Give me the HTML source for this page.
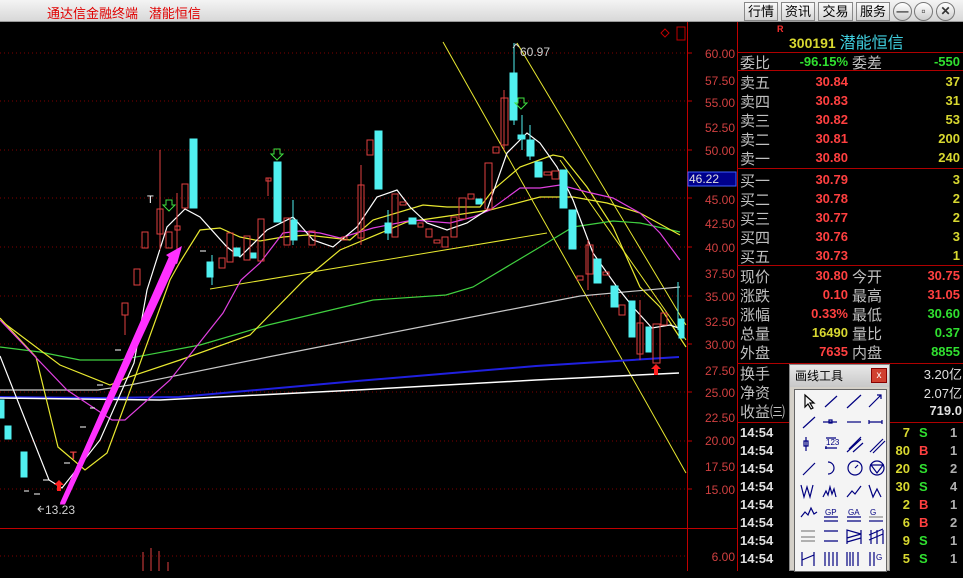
<!DOCTYPE html>
<html><head><meta charset="utf-8"><style>
*{margin:0;padding:0;box-sizing:border-box}
body{width:963px;height:571px;background:#000;overflow:hidden;position:relative;font-family:"Liberation Sans","Noto Sans CJK SC",sans-serif}
#tb{position:absolute;left:0;top:0;width:963px;height:22px;background:linear-gradient(#f4f4f4,#d8d8d8);border-bottom:1px solid #999}
#tb .t{position:absolute;left:47px;top:3px;color:#e00000;font-size:13px}
.btn{position:absolute;top:2px;height:19px;border:1px solid #888;background:linear-gradient(#fafafa,#d4d4d4);font-size:13px;line-height:17px;text-align:center;color:#000}
.rb{position:absolute;top:2px;width:19px;height:19px;border-radius:50%;border:1px solid #777;background:linear-gradient(#fff,#ccc);font-size:12px;line-height:17px;text-align:center;color:#333;font-weight:bold}
.r{position:absolute;font-size:14px;white-space:nowrap}
.l{color:#c0c0c0;font-size:15px}
.n{font-weight:bold;font-size:13px;font-family:"Liberation Sans",sans-serif}
.red{color:#ff4040}.yel{color:#d8d830}.grn{color:#30e030}.wht{color:#e0e0e0}
.hl{position:absolute;left:737px;width:226px;height:1px;background:#b00000}
#dlg{position:absolute;left:789px;top:364px;width:101px;height:207px;background:#d4d0c8;border:1px solid #888}
#dlg .h{height:22px;background:linear-gradient(#e8e8e8,#c8c8c8);font-size:12px;line-height:22px;padding-left:5px;color:#000}
#dlg .x{position:absolute;left:81px;top:3px;width:16px;height:15px;background:#d04030;border:1px solid #800;color:#fff;font-size:10px;text-align:center;line-height:13px}
#dlg .p{position:absolute;left:4px;top:24px;width:93px;height:183px;background:#f4f4f4;border:1px solid #666}
</style></head><body>
<div id="tb"><span class="t">通达信金融终端 &nbsp; 潜能恒信</span>
<div class="btn" style="left:744px;width:34px">行情</div>
<div class="btn" style="left:781px;width:34px">资讯</div>
<div class="btn" style="left:818px;width:35px">交易</div>
<div class="btn" style="left:856px;width:34px">服务</div>
<div class="rb" style="left:893px">—</div>
<div class="rb" style="left:914px">▫</div>
<div class="rb" style="left:936px">✕</div>
</div>

<svg width="963" height="571" style="position:absolute;left:0;top:0" xmlns="http://www.w3.org/2000/svg">
<g stroke="#800000" stroke-dasharray="1,3" stroke-width="1">
<line x1="0" y1="53" x2="687" y2="53"/><line x1="0" y1="101" x2="687" y2="101"/><line x1="0" y1="150" x2="687" y2="150"/><line x1="0" y1="198" x2="687" y2="198"/><line x1="0" y1="247" x2="687" y2="247"/><line x1="0" y1="296" x2="687" y2="296"/><line x1="0" y1="344" x2="687" y2="344"/><line x1="0" y1="392" x2="687" y2="392"/><line x1="0" y1="441" x2="687" y2="441"/><line x1="0" y1="489" x2="687" y2="489"/><line x1="0" y1="556" x2="687" y2="556"/>
</g>
<line x1="687.5" y1="22" x2="687.5" y2="571" stroke="#c00000"/>
<line x1="737.5" y1="22" x2="737.5" y2="571" stroke="#c00000"/>
<line x1="0" y1="528.5" x2="737" y2="528.5" stroke="#c00000"/>
<g stroke="#c00000"><line x1="687" y1="53" x2="692" y2="53"/><line x1="687" y1="101" x2="692" y2="101"/><line x1="687" y1="150" x2="692" y2="150"/><line x1="687" y1="198" x2="692" y2="198"/><line x1="687" y1="247" x2="692" y2="247"/><line x1="687" y1="296" x2="692" y2="296"/><line x1="687" y1="344" x2="692" y2="344"/><line x1="687" y1="392" x2="692" y2="392"/><line x1="687" y1="441" x2="692" y2="441"/><line x1="687" y1="489" x2="692" y2="489"/></g>
<g fill="#d04040" font-size="12" text-anchor="end" font-family="Liberation Sans">
<text x="735" y="58">60.00</text><text x="735" y="85">57.50</text><text x="735" y="107">55.00</text><text x="735" y="132">52.50</text><text x="735" y="155">50.00</text><text x="735" y="204">45.00</text><text x="735" y="228">42.50</text><text x="735" y="252">40.00</text><text x="735" y="278">37.50</text><text x="735" y="301">35.00</text><text x="735" y="326">32.50</text><text x="735" y="349">30.00</text><text x="735" y="375">27.50</text><text x="735" y="397">25.00</text><text x="735" y="422">22.50</text><text x="735" y="445">20.00</text><text x="735" y="471">17.50</text><text x="735" y="494">15.00</text><text x="735" y="561">6.00</text>
</g>
<rect x="688" y="172" width="48" height="14" fill="#00008c" stroke="#4060ff"/>
<text x="689" y="183" fill="#e0e0e0" font-size="12" font-family="Liberation Sans">46.22</text>
<path d="M665 29 l4 4 -4 4 -4 -4z" fill="none" stroke="#c00000"/><rect x="677" y="27" width="8" height="13" fill="none" stroke="#c00000"/>

<!-- channel lines -->
<g stroke="#e8e830" stroke-width="1" fill="none">
<line x1="443" y1="42" x2="686" y2="473"/>
<line x1="517" y1="43" x2="686" y2="325"/>
<line x1="560" y1="160" x2="686" y2="340"/>
<line x1="210" y1="289" x2="547" y2="233"/>
</g>
<!-- MAs -->
<g fill="none" stroke-width="1.2">
<polyline stroke="#2020e0" stroke-width="2" points="0,397 100,398 179,397 357,381 536,366 679,357"/>
<polyline stroke="#ffffff" stroke-width="1.5" points="0,398 160,400 357,390 536,380 679,373"/>
<polyline stroke="#c8c8c8" points="0,390 98,390 130,385 268,357 446,322 580,296 680,287"/>
<polyline stroke="#40d040" points="0,347 40,352 80,360 120,360 200,345 268,325 373,300 446,295 473,287 540,247 573,227 613,221 640,223 680,232"/>
<polyline stroke="#e8e830" points="0,318 36,357 58,447 85,470 107,453 134,380 170,280 180,262 200,230 220,228 240,237 260,241 283,237 307,235 350,240 373,220 423,205 447,207 480,207 493,190 520,167 553,155 563,157 587,187 613,227 640,287 660,307 686,347"/>
<polyline stroke="#e8e830" points="0,320 60,365 110,385 129,377 180,360 250,335 304,280 340,250 407,222 490,210 540,197 573,197 607,203 640,213 680,235"/>
<polyline stroke="#e040e0" points="0,320 67,390 112,420 125,420 170,380 223,313 241,280 260,263 283,233 300,231 320,233 340,238 373,228 413,220 450,223 473,217 490,210 520,188 540,188 560,185 587,192 613,198 640,213 660,233 680,260"/>
<polyline stroke="#ffffff" points="0,356 49,480 62,488 100,440 134,363 147,290 167,227 185,209 200,217 227,247 240,257 267,230 293,217 313,240 333,247 357,227 377,197 397,190 410,207 427,223 447,230 467,223 487,210 507,153 527,133 540,143 557,167 573,200 593,253 617,287 633,307 652,328 670,325 684,330"/>
</g>
<!-- candles cyan -->
<g fill="#50f0f0" stroke="#50f0f0">
<rect x="0" y="400" width="4" height="18"/><rect x="5" y="426" width="6" height="13"/><rect x="21" y="452" width="6" height="25"/>
<rect x="190" y="139" width="7" height="69"/><rect x="207" y="262" width="6" height="15"/><rect x="233" y="248" width="7" height="8"/><rect x="250" y="253" width="6" height="5"/><rect x="274" y="162" width="7" height="60"/><rect x="290" y="220" width="7" height="20"/>
<rect x="375" y="131" width="7" height="58"/><rect x="385" y="223" width="6" height="10"/><rect x="409" y="218" width="7" height="6"/><rect x="476" y="199" width="6" height="5"/><rect x="510" y="73" width="7" height="47"/><rect x="518" y="135" width="7" height="4"/><rect x="527" y="140" width="7" height="16"/><rect x="535" y="162" width="7" height="15"/><rect x="560" y="170" width="7" height="38"/><rect x="569" y="210" width="7" height="39"/><rect x="594" y="259" width="7" height="24"/><rect x="611" y="286" width="7" height="21"/><rect x="629" y="301" width="6" height="36"/><rect x="646" y="327" width="5" height="25"/><rect x="679" y="319" width="5" height="19"/>
<line x1="514" y1="43" x2="514" y2="125"/><line x1="522" y1="115" x2="522" y2="150"/><line x1="530" y1="125" x2="530" y2="160"/><line x1="293" y1="200" x2="293" y2="245"/><line x1="212" y1="255" x2="212" y2="285"/><line x1="388" y1="210" x2="388" y2="240"/><line x1="678" y1="282" x2="678" y2="330"/>
</g>
<!-- candles red -->
<g fill="none" stroke="#e04040">
<rect x="122" y="303" width="6" height="12"/><rect x="134" y="269" width="6" height="16"/><rect x="142" y="232" width="6" height="16"/><rect x="157" y="209" width="6" height="25"/><rect x="166" y="232" width="6" height="16"/><rect x="175" y="226" width="5" height="4"/><rect x="182" y="184" width="6" height="24"/>
<rect x="219" y="258" width="6" height="10"/><rect x="227" y="233" width="6" height="29"/><rect x="244" y="236" width="6" height="24"/><rect x="258" y="219" width="6" height="42"/><rect x="266" y="178" width="5" height="3"/><rect x="284" y="218" width="6" height="27"/><rect x="309" y="231" width="6" height="14"/>
<rect x="342" y="237" width="5" height="3"/><rect x="358" y="185" width="6" height="53"/><rect x="367" y="140" width="6" height="15"/><rect x="392" y="194" width="6" height="43"/><rect x="400" y="202" width="6" height="3"/><rect x="418" y="223" width="5" height="4"/><rect x="426" y="229" width="6" height="8"/><rect x="434" y="240" width="6" height="3"/><rect x="442" y="237" width="6" height="10"/><rect x="451" y="217" width="6" height="20"/><rect x="459" y="198" width="7" height="21"/><rect x="468" y="194" width="6" height="5"/><rect x="485" y="163" width="7" height="46"/><rect x="493" y="147" width="6" height="6"/><rect x="501" y="98" width="7" height="47"/>
<rect x="544" y="172" width="7" height="3"/><rect x="552" y="171" width="7" height="8"/><rect x="577" y="276" width="6" height="4"/><rect x="586" y="245" width="7" height="29"/><rect x="603" y="272" width="6" height="3"/><rect x="619" y="305" width="6" height="10"/><rect x="637" y="323" width="6" height="31"/><rect x="653" y="324" width="7" height="39"/><rect x="661" y="313" width="6" height="12"/>
<line x1="160" y1="150" x2="160" y2="250"/><line x1="177" y1="193" x2="177" y2="250"/><line x1="268" y1="178" x2="268" y2="196"/><line x1="361" y1="165" x2="361" y2="245"/><line x1="125" y1="315" x2="125" y2="335"/><line x1="504" y1="90" x2="504" y2="150"/><line x1="588" y1="240" x2="588" y2="290"/><line x1="640" y1="300" x2="640" y2="360"/>
</g>
<g stroke="#fff"><line x1="24" y1="491" x2="29" y2="491"/><line x1="34" y1="494" x2="40" y2="494"/><line x1="43" y1="480" x2="49" y2="480"/><line x1="64" y1="463" x2="70" y2="463"/><line x1="80" y1="427" x2="86" y2="427"/><line x1="90" y1="408" x2="95" y2="408"/><line x1="97" y1="385" x2="103" y2="385"/><line x1="115" y1="350" x2="121" y2="350"/><line x1="200" y1="251" x2="206" y2="251"/></g>
<text x="147" y="203" fill="#fff" font-size="11">T</text>
<text x="70" y="459" fill="#e04040" font-size="11" font-weight="bold">T</text>
<!-- green arrows -->
<g fill="none" stroke="#40e040"><path d="M166 200h6v5h3l-6 6-6-6h3z"/><path d="M274 149h6v5h3l-6 6-6-6h3z"/><path d="M518 98h6v5h3l-6 6-6-6h3z"/></g>
<g fill="#ff2020"><path d="M59 480l5 5h-3v6h-4v-6h-3z"/><path d="M656 364l5 5h-3v6h-4v-6h-3z"/></g>
<text x="520" y="56" fill="#d0d0d0" font-size="12">60.97</text><path d="M513 48l3-4 3 3" stroke="#d0d0d0" fill="none"/>
<text x="45" y="514" fill="#d0d0d0" font-size="12">13.23</text><path d="M38 509h6M41 506l-3 3 3 3" stroke="#d0d0d0" fill="none"/>
<!-- pink arrow -->
<polygon points="60,503 64,503 172,262 177,264 182,246 166,255 170,258" fill="#ff30ff"/>
<polygon points="62,503 64,503 175,262 170,258" fill="#ff30ff" stroke="#ff30ff" stroke-width="3"/>
<g stroke="#e04040"><line x1="143" y1="552" x2="143" y2="571"/><line x1="151" y1="548" x2="151" y2="571"/><line x1="159" y1="551" x2="159" y2="571"/><line x1="168" y1="562" x2="168" y2="571"/></g>
</svg>

<div class="hl" style="top:52px"></div><div class="hl" style="top:70px"></div><div class="hl" style="top:168px"></div><div class="hl" style="top:265px"></div><div class="hl" style="top:363px"></div><div class="hl" style="top:422px"></div>
<div class="r" style="left:777px;top:24px;color:#ff3030;font-size:9px;font-weight:bold">R</div>
<div class="r" style="left:789px;top:29px"><span class="n yel" style="font-size:14px">300191</span> <span style="color:#40d0e0;font-size:16px">潜能恒信</span></div>
<div id="rows"></div>
<div class="r l" style="left:740px;top:52px">委比</div><div class="r n grn" style="left:790px;width:58px;text-align:right;top:54px">-96.15%</div><div class="r l" style="left:852px;top:52px">委差</div><div class="r n grn" style="left:900px;width:60px;text-align:right;top:54px">-550</div>

<div class="r l" style="left:740px;top:72px">卖五</div><div class="r n red" style="left:790px;width:58px;text-align:right;top:74px">30.84</div><div class="r n yel" style="left:900px;width:60px;text-align:right;top:74px">37</div>
<div class="r l" style="left:740px;top:91px">卖四</div><div class="r n red" style="left:790px;width:58px;text-align:right;top:93px">30.83</div><div class="r n yel" style="left:900px;width:60px;text-align:right;top:93px">31</div>
<div class="r l" style="left:740px;top:110px">卖三</div><div class="r n red" style="left:790px;width:58px;text-align:right;top:112px">30.82</div><div class="r n yel" style="left:900px;width:60px;text-align:right;top:112px">53</div>
<div class="r l" style="left:740px;top:129px">卖二</div><div class="r n red" style="left:790px;width:58px;text-align:right;top:131px">30.81</div><div class="r n yel" style="left:900px;width:60px;text-align:right;top:131px">200</div>
<div class="r l" style="left:740px;top:148px">卖一</div><div class="r n red" style="left:790px;width:58px;text-align:right;top:150px">30.80</div><div class="r n yel" style="left:900px;width:60px;text-align:right;top:150px">240</div>

<div class="r l" style="left:740px;top:170px">买一</div><div class="r n red" style="left:790px;width:58px;text-align:right;top:172px">30.79</div><div class="r n yel" style="left:900px;width:60px;text-align:right;top:172px">3</div>
<div class="r l" style="left:740px;top:189px">买二</div><div class="r n red" style="left:790px;width:58px;text-align:right;top:191px">30.78</div><div class="r n yel" style="left:900px;width:60px;text-align:right;top:191px">2</div>
<div class="r l" style="left:740px;top:208px">买三</div><div class="r n red" style="left:790px;width:58px;text-align:right;top:210px">30.77</div><div class="r n yel" style="left:900px;width:60px;text-align:right;top:210px">2</div>
<div class="r l" style="left:740px;top:227px">买四</div><div class="r n red" style="left:790px;width:58px;text-align:right;top:229px">30.76</div><div class="r n yel" style="left:900px;width:60px;text-align:right;top:229px">3</div>
<div class="r l" style="left:740px;top:246px">买五</div><div class="r n red" style="left:790px;width:58px;text-align:right;top:248px">30.73</div><div class="r n yel" style="left:900px;width:60px;text-align:right;top:248px">1</div>

<div class="r l" style="left:740px;top:266px">现价</div><div class="r n red" style="left:790px;width:58px;text-align:right;top:268px">30.80</div><div class="r l" style="left:852px;top:266px">今开</div><div class="r n red" style="left:900px;width:60px;text-align:right;top:268px">30.75</div>
<div class="r l" style="left:740px;top:285px">涨跌</div><div class="r n red" style="left:790px;width:58px;text-align:right;top:287px">0.10</div><div class="r l" style="left:852px;top:285px">最高</div><div class="r n red" style="left:900px;width:60px;text-align:right;top:287px">31.05</div>
<div class="r l" style="left:740px;top:304px">涨幅</div><div class="r n red" style="left:790px;width:58px;text-align:right;top:306px">0.33%</div><div class="r l" style="left:852px;top:304px">最低</div><div class="r n grn" style="left:900px;width:60px;text-align:right;top:306px">30.60</div>
<div class="r l" style="left:740px;top:323px">总量</div><div class="r n yel" style="left:790px;width:58px;text-align:right;top:325px">16490</div><div class="r l" style="left:852px;top:323px">量比</div><div class="r n grn" style="left:900px;width:60px;text-align:right;top:325px">0.37</div>
<div class="r l" style="left:740px;top:342px">外盘</div><div class="r n red" style="left:790px;width:58px;text-align:right;top:344px">7635</div><div class="r l" style="left:852px;top:342px">内盘</div><div class="r n grn" style="left:900px;width:60px;text-align:right;top:344px">8855</div>

<div class="r l" style="left:740px;top:363px">换手</div><div class="r wht" style="left:890px;width:72px;text-align:right;top:364px;font-size:13px">3.20亿</div>
<div class="r l" style="left:740px;top:382px">净资</div><div class="r wht" style="left:890px;width:72px;text-align:right;top:383px;font-size:13px">2.07亿</div>
<div class="r l" style="left:740px;top:401px">收益㈢</div><div class="r wht n" style="left:890px;width:72px;text-align:right;top:403px">719.0</div>

<div style="position:absolute;left:740px;top:424px;line-height:18px;font-size:13px;font-weight:bold;color:#e0e0e0">14:54<br>14:54<br>14:54<br>14:54<br>14:54<br>14:54<br>14:54<br>14:54</div>
<div style="position:absolute;left:880px;width:30px;text-align:right;top:424px;line-height:18px;font-size:13px;font-weight:bold;color:#d8d830">7<br>80<br>20<br>30<br>2<br>6<br>9<br>5</div>
<div style="position:absolute;left:919px;top:424px;line-height:18px;font-size:13px;font-weight:bold"><span class="grn">S</span><br><span class="red">B</span><br><span class="grn">S</span><br><span class="grn">S</span><br><span class="red">B</span><br><span class="red">B</span><br><span class="grn">S</span><br><span class="grn">S</span></div>
<div style="position:absolute;left:950px;top:424px;line-height:18px;font-size:13px;font-weight:bold;color:#b0b0b0">1<br>1<br>2<br>4<br>1<br>2<br>1<br>1</div>

<div id="dlg"><div class="h">画线工具</div><div class="x">x</div>
<div class="p"><svg width="93" height="183" xmlns="http://www.w3.org/2000/svg"><g stroke="#000080" stroke-width="1.2" fill="none">
<path d="M10 5v12l3-3 3 5 2-1-3-5h4z" stroke="#000"/>
<path d="M30 17l12-11"/><path d="M52 18l14-13"/><path d="M74 17l12-12m-4 0h4v4"/>
<path d="M8 38l12-11"/><path d="M28 32h14M34 30h3v3h-3z"/><path d="M52 32h14"/><path d="M74 32h13M74 30v4M87 30v4"/>
<path d="M11 47v14M9 51h4v5h-4z"/><path d="M31 48h10M30 58h12M31 56v3"/><text x="31" y="55" font-size="8" fill="#000080" stroke="none">123</text><path d="M52 62l14-13M54 59l12-12M58 62l10-9"/><path d="M75 62l13-13M78 63l12-12"/>
<path d="M8 85l12-12"/><path d="M33 72a6 6 0 1 1 0 12"/><circle cx="60" cy="78" r="7"/><path d="M60 78l3-3"/><circle cx="82" cy="78" r="7"/><path d="M76 75l12 0-6 8z"/>
<path d="M6 95l3 12 3-10 3 10 3-12"/><path d="M28 107l3-6 2 4 2-8 2 7 2-5 2 8"/><path d="M52 107l5-6 3 3 6-8"/><path d="M74 95l4 12 4-8 4 8"/>
<path d="M6 127l4-5 3 3 3-7 3 6 3-2"/><path d="M29 127h14M29 131h14"/><text x="30" y="125" font-size="8" fill="#000080" stroke="none">GP</text><path d="M52 127h14M52 131h14"/><text x="53" y="125" font-size="8" fill="#000080" stroke="none">GA</text><path d="M74 127h14" stroke="#888"/><text x="75" y="125" font-size="8" fill="#000080" stroke="none">G</text><path d="M74 131h14"/>
<path d="M6 141h14M6 151h14M6 147h14" stroke="#888"/><path d="M29 141h14M29 151h14"/><path d="M52 154v-14l14 4M52 148l14-4M52 152l14-4M66 140v14"/><path d="M76 154v-14M82 154v-14M88 154v-14M74 150l14-6M74 145l14-6"/>
<path d="M7 176v-14M7 170l12-5M19 176v-14"/><path d="M30 176v-14M34 176v-14M38 176v-14M42 176v-14"/><path d="M52 176v-14M55 176v-14M58 176v-14M63 176v-14"/><path d="M75 176v-14M79 176v-14"/><text x="81" y="170" font-size="8" fill="#000080" stroke="none">G</text>
</g></svg></div></div>
</body></html>
